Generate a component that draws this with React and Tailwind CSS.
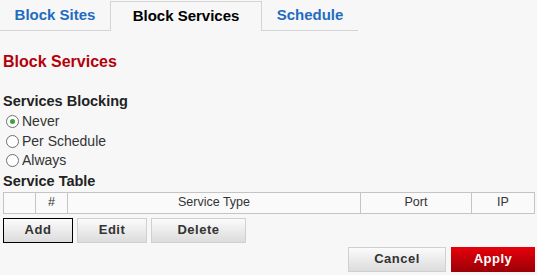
import React, { useState } from "react";

const font = { fontFamily: '"Liberation Sans", Arial, sans-serif' };

const tabs = ["Block Sites", "Block Services", "Schedule"];
const options = ["Never", "Per Schedule", "Always"];

const Radio = ({ checked }) => (
  <span className="w-[13px] h-[13px] rounded-full border border-[#6f6f6f] bg-white flex items-center justify-center">
    {checked && <span className="w-[5px] h-[5px] rounded-full bg-[#3aa33a]" />}
  </span>
);

export default function App() {
  const [active] = useState(1);
  const [blocking, setBlocking] = useState("Never");

  return (
    <div className="w-[537px] h-[275px] bg-[#f7f7f7] overflow-hidden text-[#222]" style={font}>
      {/* tabs */}
      <div className="flex w-[358px] h-[31px] border-b border-[#d4d4d4]">
        {tabs.map((t, i) => (
          <div
            key={t}
            className={`flex items-center justify-center text-[15px] font-bold ${
              i === active
                ? "w-[152px] mt-[1px] -mb-px bg-[#f7f7f7] border border-b-0 border-[#d4d4d4] text-black"
                : i === 0
                ? "w-[110px] text-[#1f6cc0]"
                : "w-[96px] text-[#1f6cc0]"
            }`}
          >
            {t}
          </div>
        ))}
      </div>

      <div className="px-[3px]">
        <h2 className="mt-[22px] text-[16px] font-bold text-[#b5000a] leading-[18px]">
          Block Services
        </h2>

        <div className="mt-[22px] text-[14.5px] font-bold leading-[16px]">Services Blocking</div>
        <div className="flex flex-col mt-[3px]">
          {options.map((o) => (
            <label
              key={o}
              className="flex items-center gap-[3px] pl-[3px] h-[19.5px] text-[14px] text-[#333]"
              onClick={() => setBlocking(o)}
            >
              <Radio checked={blocking === o} />
              <span>{o}</span>
            </label>
          ))}
        </div>
        <div className="text-[14.5px] font-bold leading-[16px] mt-[2px]">Service Table</div>

        <div className="mt-[3px] w-[532px] grid grid-cols-[32px_32px_293px_111px_1fr] h-[22px] border border-[#c4c4c4] bg-[#fafafa] text-[12.5px] text-[#333]">
          <div className="border-r border-[#c4c4c4]" />
          <div className="border-r border-[#c4c4c4] flex items-center justify-center">#</div>
          <div className="border-r border-[#c4c4c4] flex items-center justify-center">Service Type</div>
          <div className="border-r border-[#c4c4c4] flex items-center justify-center">Port</div>
          <div className="flex items-center justify-center">IP</div>
        </div>

        <div className="flex gap-[4px] mt-[4px]">
          <button className="w-[70px] h-[25px] border border-black bg-gradient-to-b from-[#fbfbfb] to-[#dcdcdc] text-[13px] font-bold text-[#333] tracking-[0.5px]">
            Add
          </button>
          <button className="w-[70px] h-[25px] border border-[#d0d0d0] bg-gradient-to-b from-[#fbfbfb] to-[#dcdcdc] text-[13px] font-bold text-[#333] tracking-[0.5px]">
            Edit
          </button>
          <button className="w-[95px] h-[25px] border border-[#d0d0d0] bg-gradient-to-b from-[#fbfbfb] to-[#dcdcdc] text-[13px] font-bold text-[#333] tracking-[0.5px]">
            Delete
          </button>
        </div>

        <div className="flex justify-end gap-[5px] mt-[4px] w-[532px]">
          <button className="w-[98px] h-[25px] border border-[#d0d0d0] bg-gradient-to-b from-[#fbfbfb] to-[#dcdcdc] text-[13px] font-bold text-[#333] tracking-[0.5px]">
            Cancel
          </button>
          <button className="w-[84px] h-[25px] bg-gradient-to-b from-[#e8000b] to-[#9a0006] text-[13px] font-bold text-white tracking-[0.5px]">
            Apply
          </button>
        </div>
      </div>
    </div>
  );
}
